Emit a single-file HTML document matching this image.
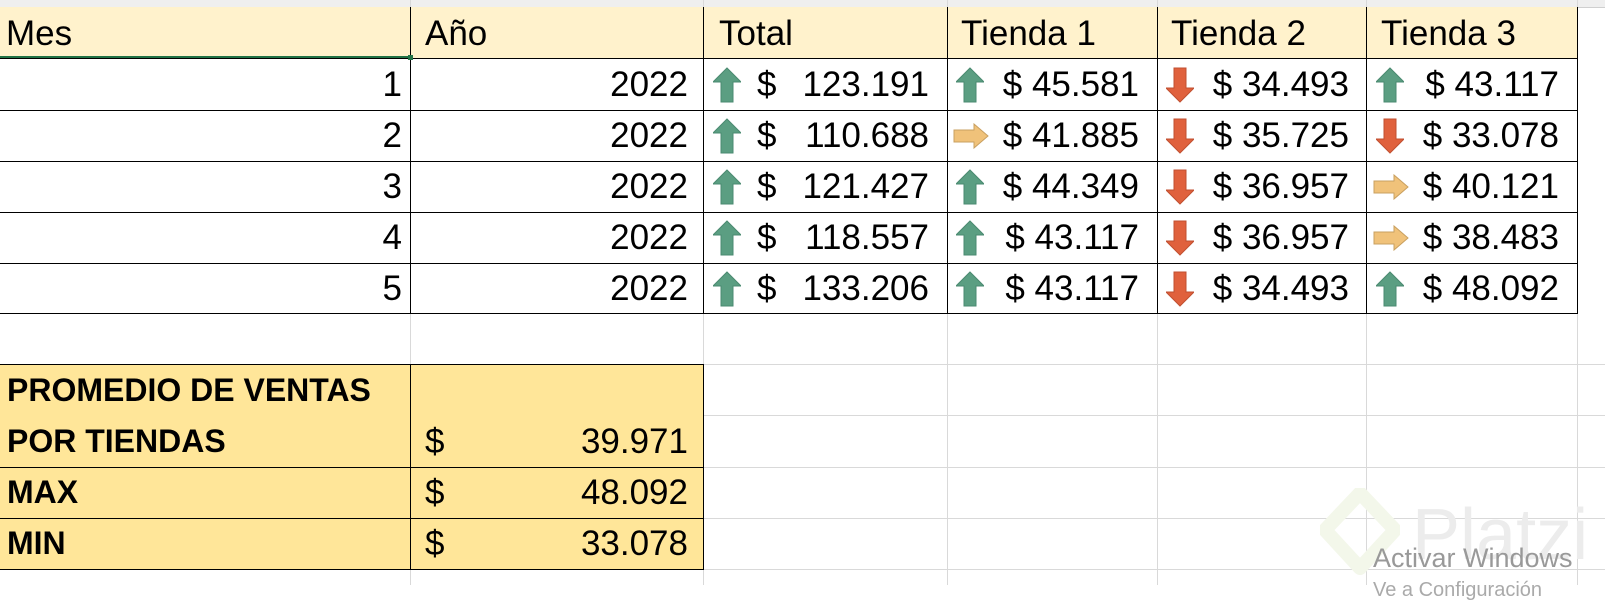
<!DOCTYPE html>
<html><head><meta charset="utf-8"><style>
body{margin:0;width:1605px;height:585px;background:#fff;position:relative;overflow:hidden;font-family:"Liberation Sans",Arial,sans-serif;}
.a{position:absolute;}
.t{position:absolute;font-size:35px;line-height:51px;color:#000;white-space:nowrap;}
.r{text-align:right;}
.b{font-weight:bold;font-size:32px;}
.hl{position:absolute;height:1px;background:#d9d9d9;left:0;width:1605px;}
.vl{position:absolute;width:1px;background:#d9d9d9;top:0;height:585px;}
.bh{position:absolute;height:1px;background:#000;}
.bv{position:absolute;width:1px;background:#000;}
svg{position:absolute;}
</style></head><body>
<div class="a" style="left:0;top:0;width:1605px;height:7px;background:#efefef;border-bottom:1px solid #cfcfcf"></div>
<div class="vl" style="left:410px"></div><div class="vl" style="left:703px"></div><div class="vl" style="left:947px"></div><div class="vl" style="left:1157px"></div><div class="vl" style="left:1366px"></div><div class="vl" style="left:1577px"></div>
<div class="hl" style="top:364px"></div><div class="hl" style="top:415px"></div><div class="hl" style="top:467px"></div><div class="hl" style="top:518px"></div><div class="hl" style="top:569px"></div>
<div class="a" style="left:0;top:7px;width:1577px;height:51px;background:#fff2cc"></div>
<div class="a" style="left:0;top:364px;width:703px;height:205px;background:#ffe699"></div>
<div class="bh" style="left:0;top:58px;width:1578px"></div>
<div class="bh" style="left:0;top:110px;width:1578px"></div>
<div class="bh" style="left:0;top:161px;width:1578px"></div>
<div class="bh" style="left:0;top:212px;width:1578px"></div>
<div class="bh" style="left:0;top:263px;width:1578px"></div>
<div class="bh" style="left:0;top:313px;width:1578px"></div>
<div class="bv" style="left:410px;top:7px;height:307px"></div>
<div class="bv" style="left:703px;top:7px;height:307px"></div>
<div class="bv" style="left:947px;top:7px;height:307px"></div>
<div class="bv" style="left:1157px;top:7px;height:307px"></div>
<div class="bv" style="left:1366px;top:7px;height:307px"></div>
<div class="bv" style="left:1577px;top:7px;height:307px"></div>
<div class="a" style="left:0;top:56px;width:410px;height:2px;background:#217346"></div>
<div class="a" style="left:408px;top:55px;width:5px;height:5px;background:#217346"></div>
<div class="bh" style="left:0;top:364px;width:703px"></div>
<div class="bh" style="left:0;top:467px;width:703px"></div>
<div class="bh" style="left:0;top:518px;width:703px"></div>
<div class="bh" style="left:0;top:569px;width:703px"></div>
<div class="bv" style="left:410px;top:364px;height:205px"></div>
<div class="bv" style="left:703px;top:364px;height:206px"></div>
<div class="t" style="left:6px;top:8px">Mes</div>
<div class="t" style="left:425px;top:8px">Año</div>
<div class="t" style="left:719px;top:8px">Total</div>
<div class="t" style="left:961px;top:8px">Tienda 1</div>
<div class="t" style="left:1171px;top:8px">Tienda 2</div>
<div class="t" style="left:1381px;top:8px">Tienda 3</div>
<svg width="0" height="0"><defs>
<g id="u"><path d="M14 1 L28 15 L20 15 L20 35 L8 35 L8 15 L0 15 Z" fill="#5b9e82" stroke="#4a8a70" stroke-width="1"/></g>
<g id="d"><path d="M14 35 L28 21 L20 21 L20 1 L8 1 L8 21 L0 21 Z" fill="#e0613d" stroke="#c04f30" stroke-width="1"/></g>
<g id="rr"><path d="M1 7 H21 V1 L35 13 L21 25 V19 H1 Z" fill="#f0c27a" stroke="#c9a060" stroke-width="1"/></g>
</defs></svg>
<div class="t r" style="left:0;width:402px;top:59px">1</div>
<div class="t r" style="left:0;width:402px;top:110px">2</div>
<div class="t r" style="left:0;width:402px;top:161px">3</div>
<div class="t r" style="left:0;width:402px;top:212px">4</div>
<div class="t r" style="left:0;width:402px;top:263px">5</div>
<div class="t r" style="left:410px;width:278px;top:59px">2022</div>
<div class="t r" style="left:410px;width:278px;top:110px">2022</div>
<div class="t r" style="left:410px;width:278px;top:161px">2022</div>
<div class="t r" style="left:410px;width:278px;top:212px">2022</div>
<div class="t r" style="left:410px;width:278px;top:263px">2022</div>
<div class="t" style="left:757px;top:59px">$</div><div class="t r" style="left:780px;width:149px;top:59px">123.191</div>
<div class="t" style="left:757px;top:110px">$</div><div class="t r" style="left:780px;width:149px;top:110px">110.688</div>
<div class="t" style="left:757px;top:161px">$</div><div class="t r" style="left:780px;width:149px;top:161px">121.427</div>
<div class="t" style="left:757px;top:212px">$</div><div class="t r" style="left:780px;width:149px;top:212px">118.557</div>
<div class="t" style="left:757px;top:263px">$</div><div class="t r" style="left:780px;width:149px;top:263px">133.206</div>
<svg style="left:713px;top:67px" width="28" height="36"><use href="#u"/></svg>
<svg style="left:713px;top:118px" width="28" height="36"><use href="#u"/></svg>
<svg style="left:713px;top:169px" width="28" height="36"><use href="#u"/></svg>
<svg style="left:713px;top:220px" width="28" height="36"><use href="#u"/></svg>
<svg style="left:713px;top:271px" width="28" height="36"><use href="#u"/></svg>
<div class="t r" style="left:990px;width:149px;top:59px">$ 45.581</div>
<div class="t r" style="left:990px;width:149px;top:110px">$ 41.885</div>
<div class="t r" style="left:990px;width:149px;top:161px">$ 44.349</div>
<div class="t r" style="left:990px;width:149px;top:212px">$ 43.117</div>
<div class="t r" style="left:990px;width:149px;top:263px">$ 43.117</div>
<svg style="left:956px;top:67px" width="28" height="36"><use href="#u"/></svg>
<svg style="left:953px;top:123px" width="36" height="26"><use href="#rr"/></svg>
<svg style="left:956px;top:169px" width="28" height="36"><use href="#u"/></svg>
<svg style="left:956px;top:220px" width="28" height="36"><use href="#u"/></svg>
<svg style="left:956px;top:271px" width="28" height="36"><use href="#u"/></svg>
<div class="t r" style="left:1200px;width:149px;top:59px">$ 34.493</div>
<div class="t r" style="left:1200px;width:149px;top:110px">$ 35.725</div>
<div class="t r" style="left:1200px;width:149px;top:161px">$ 36.957</div>
<div class="t r" style="left:1200px;width:149px;top:212px">$ 36.957</div>
<div class="t r" style="left:1200px;width:149px;top:263px">$ 34.493</div>
<svg style="left:1166px;top:67px" width="28" height="36"><use href="#d"/></svg>
<svg style="left:1166px;top:118px" width="28" height="36"><use href="#d"/></svg>
<svg style="left:1166px;top:169px" width="28" height="36"><use href="#d"/></svg>
<svg style="left:1166px;top:220px" width="28" height="36"><use href="#d"/></svg>
<svg style="left:1166px;top:271px" width="28" height="36"><use href="#d"/></svg>
<div class="t r" style="left:1410px;width:149px;top:59px">$ 43.117</div>
<div class="t r" style="left:1410px;width:149px;top:110px">$ 33.078</div>
<div class="t r" style="left:1410px;width:149px;top:161px">$ 40.121</div>
<div class="t r" style="left:1410px;width:149px;top:212px">$ 38.483</div>
<div class="t r" style="left:1410px;width:149px;top:263px">$ 48.092</div>
<svg style="left:1376px;top:67px" width="28" height="36"><use href="#u"/></svg>
<svg style="left:1376px;top:118px" width="28" height="36"><use href="#d"/></svg>
<svg style="left:1373px;top:174px" width="36" height="26"><use href="#rr"/></svg>
<svg style="left:1373px;top:225px" width="36" height="26"><use href="#rr"/></svg>
<svg style="left:1376px;top:271px" width="28" height="36"><use href="#u"/></svg>
<div class="t b" style="left:7px;top:365px">PROMEDIO DE VENTAS</div>
<div class="t b" style="left:7px;top:416px">POR TIENDAS</div>
<div class="t b" style="left:7px;top:467px">MAX</div>
<div class="t b" style="left:7px;top:518px">MIN</div>
<div class="t" style="left:425px;top:416px">$</div><div class="t r" style="left:450px;width:238px;top:416px">39.971</div>
<div class="t" style="left:425px;top:467px">$</div><div class="t r" style="left:450px;width:238px;top:467px">48.092</div>
<div class="t" style="left:425px;top:518px">$</div><div class="t r" style="left:450px;width:238px;top:518px">33.078</div>
<svg style="left:1320px;top:488px" width="80" height="95"><path d="M40 5 L75 42 L40 80 L5 42 Z" fill="none" stroke="#f3f7ea" stroke-width="14" stroke-linejoin="round"/></svg>
<div class="a" style="left:1412px;top:495px;font-size:72px;line-height:80px;color:#ececec">Platzi</div>
<div class="a" style="left:1373px;top:541px;font-size:27px;line-height:34px;color:#999">Activar Windows</div>
<div class="a" style="left:1373px;top:578px;font-size:20px;line-height:24px;color:#aaa">Ve a Configuración</div>
</body></html>
